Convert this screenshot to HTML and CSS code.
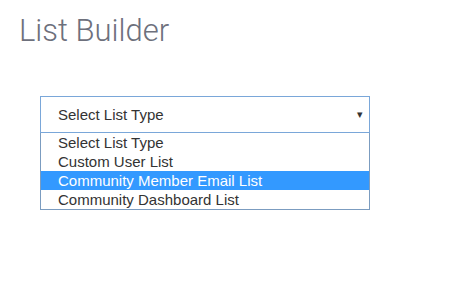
FILE: index.html
```html
<!DOCTYPE html>
<html>
<head>
<meta charset="utf-8">
<link rel="stylesheet" href="styles.css">
</head>
<body>
<div class="page">
  <h1 class="title">List Builder</h1>
  <div class="picker">
    <div class="select">
      <span class="select-value">Select List Type</span>
      <span class="select-arrow">&#9662;</span>
    </div>
    <ul class="options">
      <li class="option">Select List Type</li>
      <li class="option">Custom User List</li>
      <li class="option option-active">Community Member Email List</li>
      <li class="option">Community Dashboard List</li>
    </ul>
  </div>
</div>
</body>
</html>
```
FILE: styles.css
```css
html, body {
  margin: 0;
  padding: 0;
  background: #ffffff;
}
.page {
  padding: 13px 0 0 19px;
}
.title {
  margin: 0;
  font-family: Roboto, "Liberation Sans", sans-serif;
  font-weight: 300;
  font-size: 31px;
  line-height: 36px;
  color: #6d707c;
}
.picker {
  margin: 47px 0 0 21px;
  width: 330px;
  font-family: "Liberation Sans", Arial, sans-serif;
  font-size: 15px;
}
.select {
  box-sizing: border-box;
  height: 37px;
  border: 1px solid #7aa7d9;
  display: flex;
  align-items: center;
  justify-content: space-between;
  padding: 0 6px 0 17px;
  color: #333333;
}
.select-arrow {
  font-size: 11px;
  color: #333;
}
.options {
  list-style: none;
  margin: 0;
  padding: 0;
  border: 1px solid #7b9cc0;
  border-top: none;
}
.option {
  height: 19px;
  line-height: 19px;
  padding-left: 17px;
  color: #333333;
}
.option-active {
  background: #3399ff;
  color: #ffffff;
}
```
